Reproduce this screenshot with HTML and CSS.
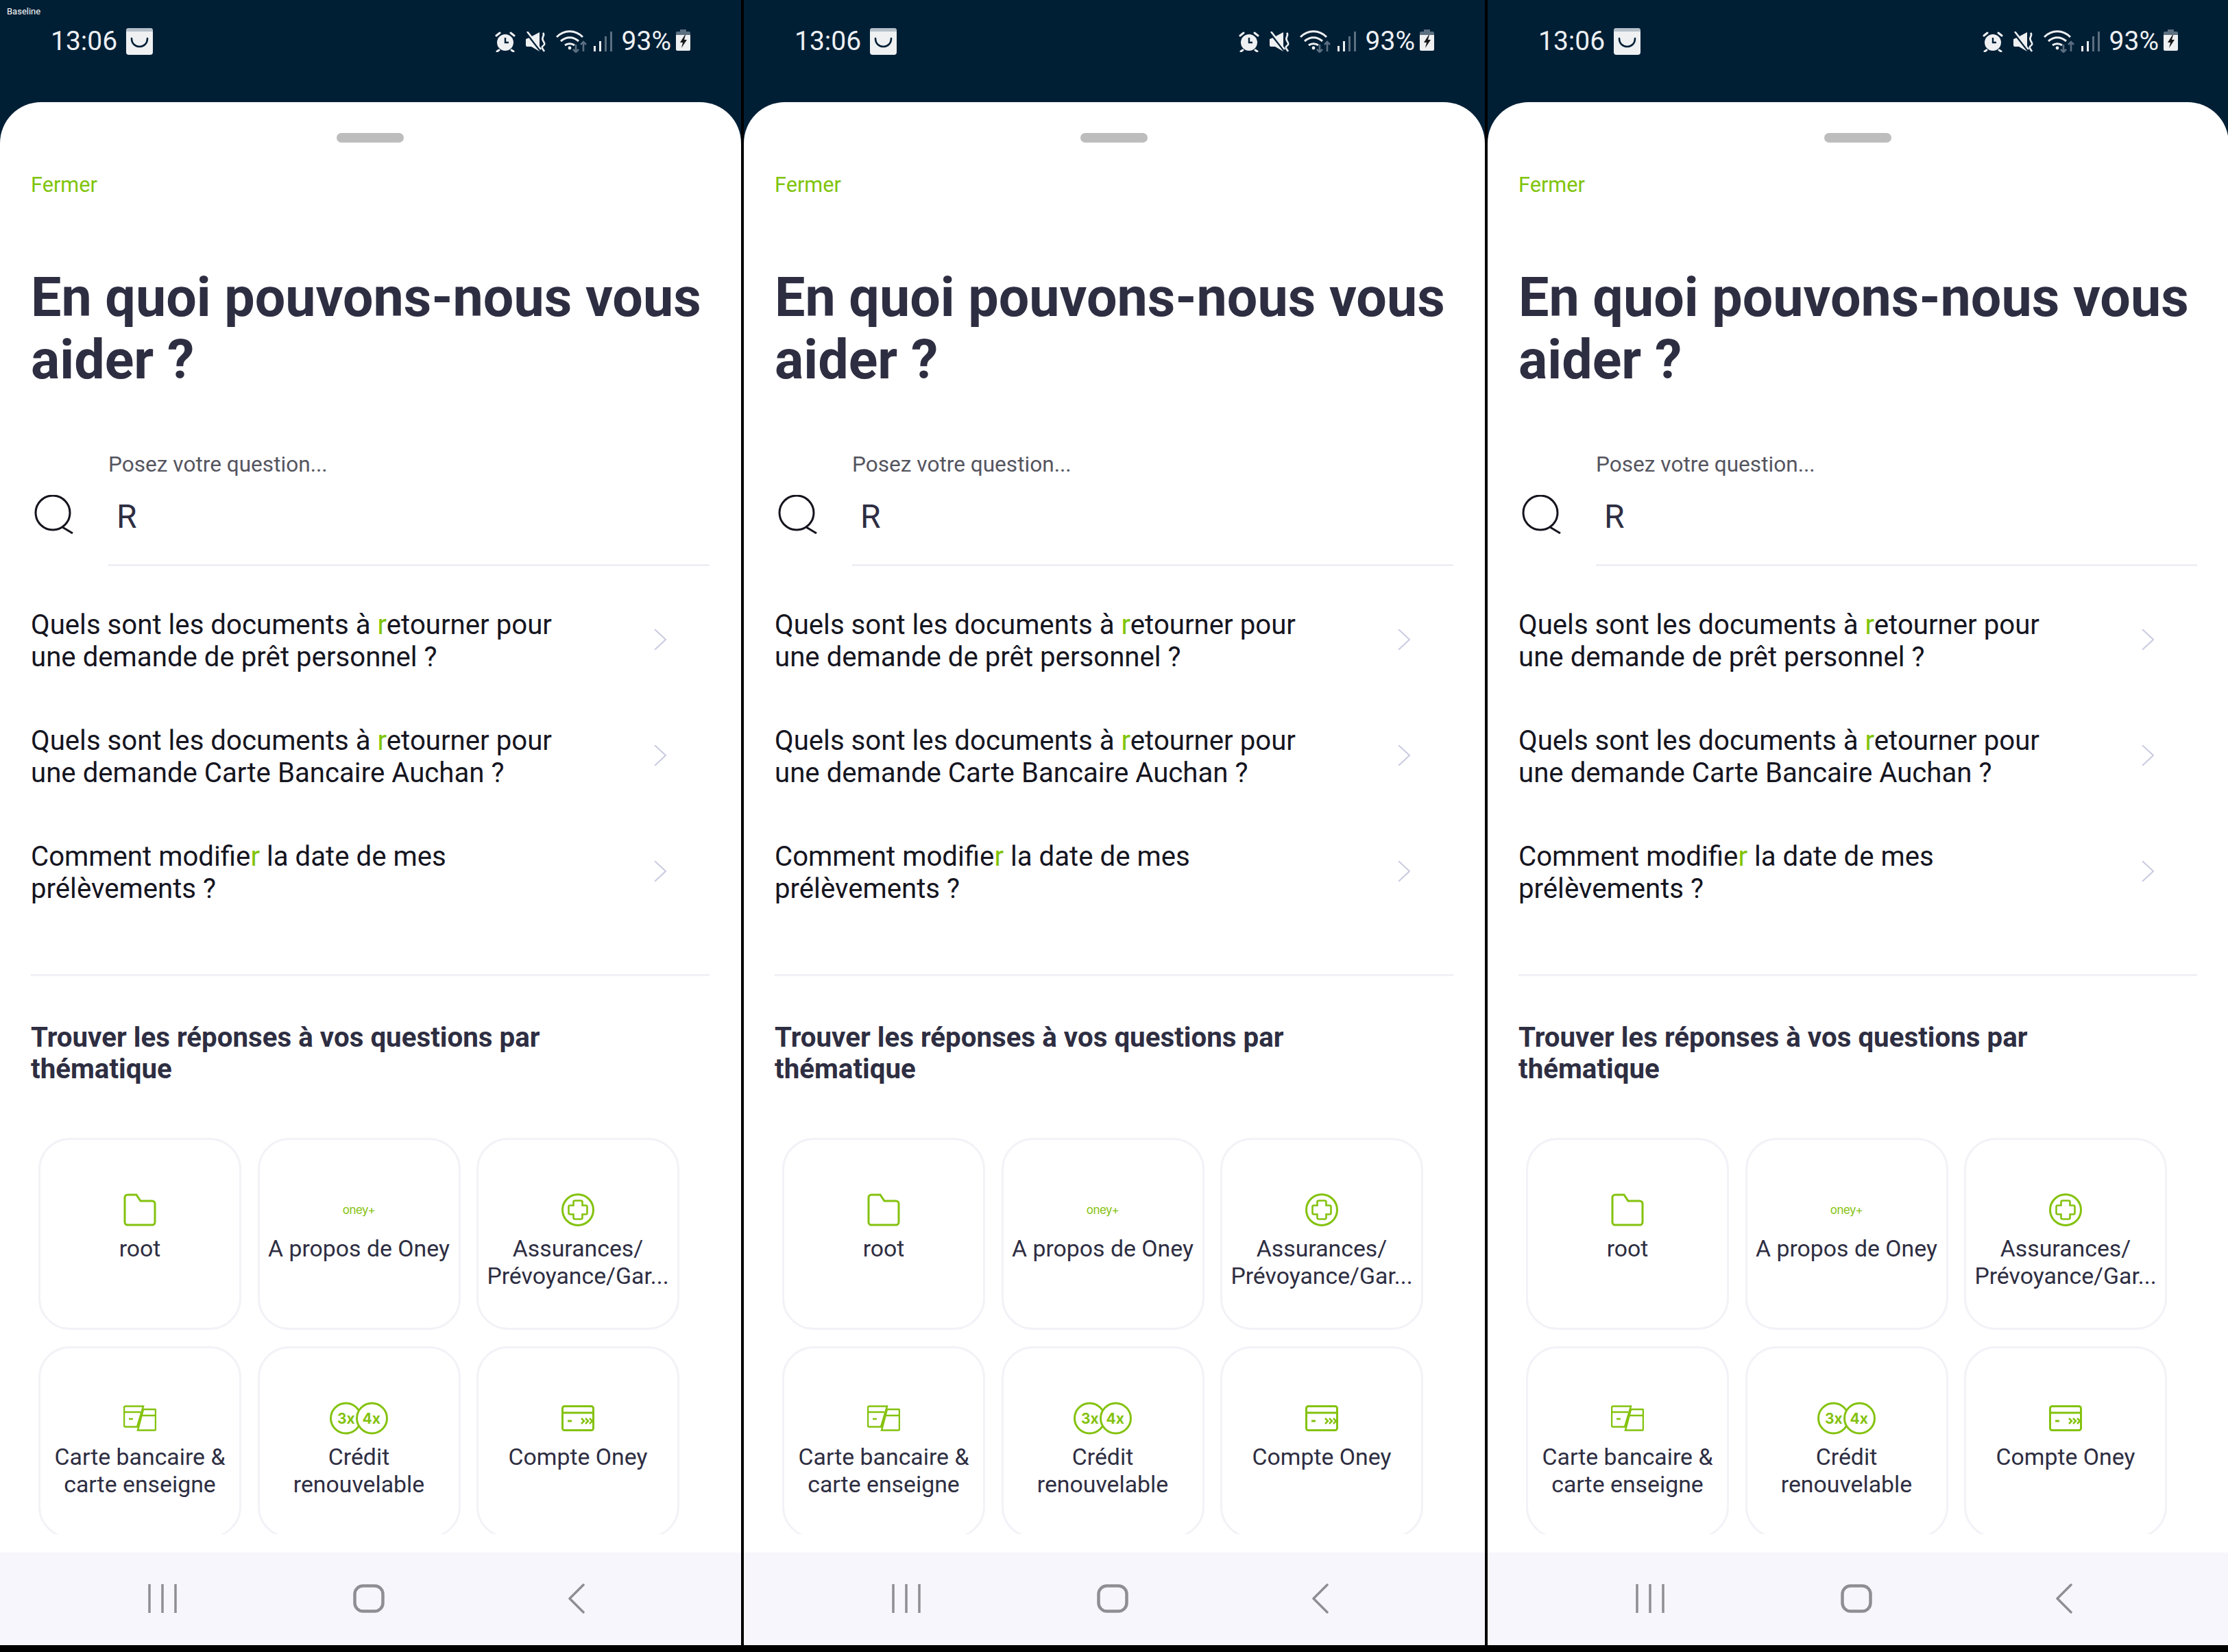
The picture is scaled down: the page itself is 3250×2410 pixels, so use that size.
FILE: index.html

```html
<!DOCTYPE html>
<html lang="fr">
<head>
<meta charset="UTF-8" />
<title>Oney - Aide</title>
<link rel="stylesheet" href="styles.css">
</head>
<body>
  <svg class="defs" width="0" height="0">
    <symbol id="bag" viewBox="0 0 39 39">
      <rect width="39" height="39" rx="4" fill="#eef0f2"/>
      <path d="M0 4a4 4 0 0 1 4-4h31a4 4 0 0 1 4 4v1H0z" fill="#b4bfc8"/>
      <path d="M8 15c0 16 23 16 23 0" fill="none" stroke="#001f35" stroke-width="2.6" stroke-linecap="round"/>
    </symbol>
    <symbol id="alarm" viewBox="0 0 30 30">
      <circle cx="15" cy="16" r="12" fill="#eef0f2"/>
      <path d="M15 9v7h5" fill="none" stroke="#001f35" stroke-width="2.4"/>
      <path d="M2 6l5-4M28 6l-5-4M6 27l-3 2M24 27l3 2" stroke="#eef0f2" stroke-width="3" stroke-linecap="round"/>
    </symbol>
    <symbol id="mute" viewBox="0 0 30 30">
      <path d="M0 11l5-2 15-8v28l-12-7H2a2 2 0 0 1-2-2z" fill="#eef0f2"/>
      <path d="M0 1l22 28" stroke="#001f35" stroke-width="3"/>
      <path d="M2 0l20 26" stroke="#eef0f2" stroke-width="2.6"/>
      <path d="M25 2c4 4-3 6 0 11s3 6 0 8 0 5 2 8" fill="none" stroke="#eef0f2" stroke-width="2.6"/>
    </symbol>
    <symbol id="wifi" viewBox="0 0 46 34">
      <path d="M1 11c11-11 27-11 38 0" fill="none" stroke="#eef0f2" stroke-width="3"/>
      <path d="M7 17c8-7 18-7 26 0" fill="none" stroke="#eef0f2" stroke-width="3"/>
      <path d="M13 23c4-3 10-3 14 0" fill="none" stroke="#eef0f2" stroke-width="3"/>
      <circle cx="20" cy="27" r="2.4" fill="#eef0f2"/>
      <path d="M29 22v11M25 29l4 4 4-4M40 32v-13M36 22l4-4 4 4" fill="none" stroke="#5b6f80" stroke-width="2.6"/>
    </symbol>
    <symbol id="signal" viewBox="0 0 27 30">
      <rect x="0" y="21" width="3" height="8" fill="#eef0f2"/>
      <rect x="8" y="14" width="3" height="15" fill="#eef0f2"/>
      <rect x="16" y="7" width="3" height="22" fill="#5b6f80"/>
      <rect x="24" y="0" width="3" height="29" fill="#5b6f80"/>
    </symbol>
    <symbol id="battery" viewBox="0 0 21 31">
      <path d="M6 0h9v4H6z" fill="#5b6f80"/>
      <path d="M2 3h17a2 2 0 0 1 2 2v3H0V5a2 2 0 0 1 2-2z" fill="#5b6f80"/>
      <path d="M0 8h21v21a2 2 0 0 1-2 2H2a2 2 0 0 1-2-2z" fill="#eef0f2"/>
      <path d="M13 8L6 19h4l-2 8 8-12h-4l2-7z" fill="#1a1a1a"/>
    </symbol>
    <symbol id="loupe" viewBox="0 0 58 57">
      <circle cx="27" cy="26" r="25" fill="none" stroke="#15151f" stroke-width="3"/>
      <path d="M41 47l15 9" fill="none" stroke="#15151f" stroke-width="3"/>
    </symbol>
    <symbol id="chevron" viewBox="0 0 18 30">
      <path d="M1 0l16 15L1 30" fill="none" stroke="#c9cbe0" stroke-width="2"/>
    </symbol>
    <symbol id="folder" viewBox="0 0 48 48">
      <path d="M2 6a4 4 0 0 1 4-4h13l6 9h17a4 4 0 0 1 4 4v27a4 4 0 0 1-4 4H6a4 4 0 0 1-4-4z" fill="none" stroke="#84c20e" stroke-width="3"/>
    </symbol>
    <symbol id="health" viewBox="0 0 48 48">
      <circle cx="24" cy="24" r="22.5" fill="none" stroke="#84c20e" stroke-width="3"/>
      <path d="M17.500 12.500a2 2 0 0 1 2-2h9a2 2 0 0 1 2 2v5h5a2 2 0 0 1 2 2v9a2 2 0 0 1-2 2h-5v5a2 2 0 0 1-2 2h-9a2 2 0 0 1-2-2v-5h-5a2 2 0 0 1-2-2v-9a2 2 0 0 1 2-2h5z" fill="none" stroke="#84c20e" stroke-width="2.600"/>
    </symbol>
    <symbol id="cards" viewBox="0 0 48 38">
      <path d="M3 1.500h26l-9 30H3a2 2 0 0 1-2-2v-26a2 2 0 0 1 2-2zM1 10h24M8 20h6" fill="none" stroke="#84c20e" stroke-width="2.500"/>
      <path d="M29 6h17a1.500 1.500 0 0 1 1 1.500v28a1.500 1.500 0 0 1-1 1H21zM26 15h21" fill="none" stroke="#84c20e" stroke-width="2.500"/>
    </symbol>
    <symbol id="rates" viewBox="0 0 85 48">
      <circle cx="23.500" cy="24" r="22" fill="#fff" stroke="#84c20e" stroke-width="3"/>
      <circle cx="61.500" cy="24" r="22" fill="#fff" stroke="#84c20e" stroke-width="3"/>
    </symbol>
    <symbol id="account" viewBox="0 0 48 38">
      <rect x="1.500" y="1.500" width="45" height="35" rx="3" fill="none" stroke="#84c20e" stroke-width="3"/>
      <path d="M1 11h46M9 23h6" fill="none" stroke="#84c20e" stroke-width="3"/>
      <path d="M29 19l4 4-4 4M35 19l4 4-4 4M41 19l4 4-4 4" fill="none" stroke="#84c20e" stroke-width="2.500"/>
    </symbol>
    <symbol id="nav-recent" viewBox="0 0 42 42">
      <path d="M2 0v42M21 0v42M40 0v42" fill="none" stroke="#8e8e93" stroke-width="3.500" stroke-linecap="round"/>
    </symbol>
    <symbol id="nav-home" viewBox="0 0 46 42">
      <rect x="2.500" y="2.500" width="41" height="37" rx="12" fill="none" stroke="#8e8e93" stroke-width="4.500"/>
    </symbol>
    <symbol id="nav-back" viewBox="0 0 25 44">
      <path d="M23 2L3 22l20 20" fill="none" stroke="#8e8e93" stroke-width="3.500" stroke-linecap="round" stroke-linejoin="round"/>
    </symbol>
  </svg>

  <div class="screens">
    <!-- Ecran 1 -->
    <section class="phone">
      <span class="baseline">Baseline</span>
      <header class="status">
        <span class="time">13:06</span>
        <svg class="ico-bag"><use href="#bag"/></svg>
        <div class="status-right">
          <svg class="ico-alarm"><use href="#alarm"/></svg>
          <svg class="ico-mute"><use href="#mute"/></svg>
          <svg class="ico-wifi"><use href="#wifi"/></svg>
          <svg class="ico-signal"><use href="#signal"/></svg>
          <span class="percent">93%</span>
          <svg class="ico-battery"><use href="#battery"/></svg>
        </div>
      </header>
      <main class="sheet">
        <div class="handle"></div>
        <a class="close">Fermer</a>
        <h1>En quoi pouvons-nous vous aider ?</h1>
        <div class="search">
          <svg class="ico-loupe"><use href="#loupe"/></svg>
          <div class="field">
            <label>Posez votre question...</label>
            <div class="value">R</div>
          </div>
        </div>
        <ul class="results">
          <li><p>Quels sont les documents à <b>r</b>etourner pour<br>une demande de prêt personnel ?</p><svg class="ico-chevron"><use href="#chevron"/></svg></li>
          <li><p>Quels sont les documents à <b>r</b>etourner pour<br>une demande Carte Bancaire Auchan ?</p><svg class="ico-chevron"><use href="#chevron"/></svg></li>
          <li><p>Comment modifie<b>r</b> la date de mes<br>prélèvements ?</p><svg class="ico-chevron"><use href="#chevron"/></svg></li>
        </ul>
        <h2>Trouver les réponses à vos questions par thématique</h2>
        <div class="topics">
          <div class="topic"><div class="topic-ico"><svg class="ico-48"><use href="#folder"/></svg></div><p>root</p></div>
          <div class="topic"><div class="topic-ico"><span class="oney">oney+</span></div><p>A propos de Oney</p></div>
          <div class="topic"><div class="topic-ico"><svg class="ico-48"><use href="#health"/></svg></div><p>Assurances/ Prévoyance/Gar...</p></div>
          <div class="topic"><div class="topic-ico"><svg class="ico-card"><use href="#cards"/></svg></div><p>Carte bancaire &amp; carte enseigne</p></div>
          <div class="topic"><div class="topic-ico"><div class="rates"><svg class="ico-rates"><use href="#rates"/></svg><span>3x</span><span>4x</span></div></div><p>Crédit renouvelable</p></div>
          <div class="topic"><div class="topic-ico"><svg class="ico-card"><use href="#account"/></svg></div><p>Compte Oney</p></div>
        </div>
      </main>
      <nav class="navbar">
        <svg class="nav-recent"><use href="#nav-recent"/></svg>
        <svg class="nav-home"><use href="#nav-home"/></svg>
        <svg class="nav-back"><use href="#nav-back"/></svg>
      </nav>
    </section>

    <!-- Ecran 2 -->
    <section class="phone">
      <header class="status">
        <span class="time">13:06</span>
        <svg class="ico-bag"><use href="#bag"/></svg>
        <div class="status-right">
          <svg class="ico-alarm"><use href="#alarm"/></svg>
          <svg class="ico-mute"><use href="#mute"/></svg>
          <svg class="ico-wifi"><use href="#wifi"/></svg>
          <svg class="ico-signal"><use href="#signal"/></svg>
          <span class="percent">93%</span>
          <svg class="ico-battery"><use href="#battery"/></svg>
        </div>
      </header>
      <main class="sheet">
        <div class="handle"></div>
        <a class="close">Fermer</a>
        <h1>En quoi pouvons-nous vous aider ?</h1>
        <div class="search">
          <svg class="ico-loupe"><use href="#loupe"/></svg>
          <div class="field">
            <label>Posez votre question...</label>
            <div class="value">R</div>
          </div>
        </div>
        <ul class="results">
          <li><p>Quels sont les documents à <b>r</b>etourner pour<br>une demande de prêt personnel ?</p><svg class="ico-chevron"><use href="#chevron"/></svg></li>
          <li><p>Quels sont les documents à <b>r</b>etourner pour<br>une demande Carte Bancaire Auchan ?</p><svg class="ico-chevron"><use href="#chevron"/></svg></li>
          <li><p>Comment modifie<b>r</b> la date de mes<br>prélèvements ?</p><svg class="ico-chevron"><use href="#chevron"/></svg></li>
        </ul>
        <h2>Trouver les réponses à vos questions par thématique</h2>
        <div class="topics">
          <div class="topic"><div class="topic-ico"><svg class="ico-48"><use href="#folder"/></svg></div><p>root</p></div>
          <div class="topic"><div class="topic-ico"><span class="oney">oney+</span></div><p>A propos de Oney</p></div>
          <div class="topic"><div class="topic-ico"><svg class="ico-48"><use href="#health"/></svg></div><p>Assurances/ Prévoyance/Gar...</p></div>
          <div class="topic"><div class="topic-ico"><svg class="ico-card"><use href="#cards"/></svg></div><p>Carte bancaire &amp; carte enseigne</p></div>
          <div class="topic"><div class="topic-ico"><div class="rates"><svg class="ico-rates"><use href="#rates"/></svg><span>3x</span><span>4x</span></div></div><p>Crédit renouvelable</p></div>
          <div class="topic"><div class="topic-ico"><svg class="ico-card"><use href="#account"/></svg></div><p>Compte Oney</p></div>
        </div>
      </main>
      <nav class="navbar">
        <svg class="nav-recent"><use href="#nav-recent"/></svg>
        <svg class="nav-home"><use href="#nav-home"/></svg>
        <svg class="nav-back"><use href="#nav-back"/></svg>
      </nav>
    </section>

    <!-- Ecran 3 -->
    <section class="phone">
      <header class="status">
        <span class="time">13:06</span>
        <svg class="ico-bag"><use href="#bag"/></svg>
        <div class="status-right">
          <svg class="ico-alarm"><use href="#alarm"/></svg>
          <svg class="ico-mute"><use href="#mute"/></svg>
          <svg class="ico-wifi"><use href="#wifi"/></svg>
          <svg class="ico-signal"><use href="#signal"/></svg>
          <span class="percent">93%</span>
          <svg class="ico-battery"><use href="#battery"/></svg>
        </div>
      </header>
      <main class="sheet">
        <div class="handle"></div>
        <a class="close">Fermer</a>
        <h1>En quoi pouvons-nous vous aider ?</h1>
        <div class="search">
          <svg class="ico-loupe"><use href="#loupe"/></svg>
          <div class="field">
            <label>Posez votre question...</label>
            <div class="value">R</div>
          </div>
        </div>
        <ul class="results">
          <li><p>Quels sont les documents à <b>r</b>etourner pour<br>une demande de prêt personnel ?</p><svg class="ico-chevron"><use href="#chevron"/></svg></li>
          <li><p>Quels sont les documents à <b>r</b>etourner pour<br>une demande Carte Bancaire Auchan ?</p><svg class="ico-chevron"><use href="#chevron"/></svg></li>
          <li><p>Comment modifie<b>r</b> la date de mes<br>prélèvements ?</p><svg class="ico-chevron"><use href="#chevron"/></svg></li>
        </ul>
        <h2>Trouver les réponses à vos questions par thématique</h2>
        <div class="topics">
          <div class="topic"><div class="topic-ico"><svg class="ico-48"><use href="#folder"/></svg></div><p>root</p></div>
          <div class="topic"><div class="topic-ico"><span class="oney">oney+</span></div><p>A propos de Oney</p></div>
          <div class="topic"><div class="topic-ico"><svg class="ico-48"><use href="#health"/></svg></div><p>Assurances/ Prévoyance/Gar...</p></div>
          <div class="topic"><div class="topic-ico"><svg class="ico-card"><use href="#cards"/></svg></div><p>Carte bancaire &amp; carte enseigne</p></div>
          <div class="topic"><div class="topic-ico"><div class="rates"><svg class="ico-rates"><use href="#rates"/></svg><span>3x</span><span>4x</span></div></div><p>Crédit renouvelable</p></div>
          <div class="topic"><div class="topic-ico"><svg class="ico-card"><use href="#account"/></svg></div><p>Compte Oney</p></div>
        </div>
      </main>
      <nav class="navbar">
        <svg class="nav-recent"><use href="#nav-recent"/></svg>
        <svg class="nav-home"><use href="#nav-home"/></svg>
        <svg class="nav-back"><use href="#nav-back"/></svg>
      </nav>
    </section>
  </div>
</body>
</html>
```

FILE: styles.css

```css
html, body {
  margin: 0;
  padding: 0;
  background: #000;
  font-family: Roboto, "Liberation Sans", sans-serif;
  color: #2e2e42;
  overflow: hidden;
}
.defs {
  position: absolute;
}
.screens {
  display: flex;
  gap: 4px;
  width: 3250px;
  height: 2410px;
}
.phone {
  position: relative;
  flex: 0 0 1081px;
  min-width: 0;
  height: 2400px;
  display: flex;
  flex-direction: column;
  background: #001f35;
}
.baseline {
  position: absolute;
  top: 9px;
  left: 10px;
  font-size: 13px;
  line-height: 15px;
  color: #fff;
}

/* Barre de statut */
.status {
  height: 149px;
  box-sizing: border-box;
  padding: 41px 74px 0 74px;
  display: flex;
  align-items: flex-start;
  color: #eef0f2;
}
.time {
  font-size: 39px;
  line-height: 39px;
}
.ico-bag {
  width: 39px;
  height: 39px;
  margin-left: 13px;
}
.status-right {
  margin-left: auto;
  display: flex;
  align-items: flex-start;
}
.ico-alarm { width: 30px; height: 30px; margin-top: 5px; }
.ico-mute { width: 30px; height: 30px; margin-top: 5px; margin-left: 15px; }
.ico-wifi { width: 46px; height: 34px; margin-top: 2px; margin-left: 14px; }
.ico-signal { width: 27px; height: 30px; margin-top: 5px; margin-left: 9px; }
.percent {
  font-size: 39px;
  line-height: 39px;
  margin-left: 14px;
}
.ico-battery { width: 21px; height: 31px; margin-top: 2px; margin-left: 7px; }

/* Panneau */
.sheet {
  flex: 1;
  min-height: 0;
  background: #fff;
  border-radius: 60px 60px 0 0;
  padding: 45px 46px 0 45px;
  overflow: hidden;
}
.handle {
  width: 98px;
  height: 14px;
  margin: 0 auto;
  background: #bdbdbd;
  border-radius: 7px;
}
.close {
  display: block;
  margin-top: 43px;
  font-size: 30.7px;
  line-height: 38px;
  color: #80c40c;
}
h1 {
  margin: 100px 0 0 0;
  font-size: 79px;
  line-height: 91px;
  font-weight: 700;
  color: #2e2e42;
}

/* Recherche */
.search {
  display: flex;
  align-items: flex-start;
  margin-top: 88px;
}
.ico-loupe {
  width: 58px;
  height: 57px;
  margin: 63px 0 0 5px;
}
.field {
  flex: 1;
  margin-left: 50px;
  border-bottom: 3px solid #eeeef4;
  height: 164px;
}
.field label {
  display: block;
  font-size: 31.6px;
  line-height: 38px;
  color: #55555f;
}
.value {
  margin: 27px 0 0 12px;
  font-size: 48px;
  line-height: 60px;
}

/* Resultats */
.results {
  list-style: none;
  margin: 62px 0 0 0;
  padding: 0;
  border-bottom: 3px solid #f0f0f5;
  height: 536px;
  box-sizing: border-box;
}
.results li {
  display: flex;
  align-items: center;
  height: 94px;
  margin-bottom: 75px;
}
.results p {
  flex: 1;
  margin: 0;
  font-size: 40.2px;
  line-height: 47px;
  color: #15151f;
}
.results b {
  font-weight: 400;
  color: #80c40c;
}
.ico-chevron {
  width: 18px;
  height: 30px;
  margin: 0 63px 4px 0;
}

/* Thematiques */
h2 {
  margin: 67px 0 0 0;
  width: 800px;
  font-size: 40.3px;
  line-height: 46px;
  font-weight: 700;
  color: #2e2e42;
}
.topics {
  display: grid;
  grid-template-columns: repeat(3, 296px);
  grid-auto-rows: 280px;
  column-gap: 23.5px;
  row-gap: 24px;
  height: 578px;
  margin: 77px 0 0 11px;
  overflow: hidden;
}
.topic {
  box-sizing: border-box;
  border: 3px solid #f2f2f7;
  border-radius: 46px;
  padding: 78px 8px 0 8px;
  text-align: center;
}
.topic p {
  margin: 13px 0 0 0;
  font-size: 33.8px;
  line-height: 40px;
  color: #2e2e42;
}
.topic-ico {
  height: 48px;
  display: flex;
  justify-content: center;
  align-items: center;
}
.ico-48 { width: 48px; height: 48px; }
.ico-card { width: 48px; height: 38px; }
.oney {
  font-family: Inter, Roboto, sans-serif;
  font-size: 17px;
  letter-spacing: -0.5px;
  color: #84c20e;
}
.rates {
  position: relative;
  width: 85px;
  height: 48px;
  display: flex;
  justify-content: space-between;
  padding: 0 11px;
  box-sizing: border-box;
  align-items: center;
  font-family: Inter, Roboto, sans-serif;
  font-size: 21px;
  font-weight: 700;
  color: #84c20e;
}
.rates span {
  position: relative;
}
.ico-rates {
  position: absolute;
  top: 0;
  left: 0;
  width: 85px;
  height: 48px;
}

/* Navigation */
.navbar {
  flex: 0 0 135px;
  background: #f6f6fc;
  display: flex;
  align-items: flex-start;
  padding: 46px 0 0 216px;
  box-sizing: border-box;
}
.nav-recent { width: 42px; height: 42px; }
.nav-home { width: 46px; height: 42px; margin-left: 257px; }
.nav-back { width: 25px; height: 44px; margin-left: 267px; margin-top: -1px; }
```
